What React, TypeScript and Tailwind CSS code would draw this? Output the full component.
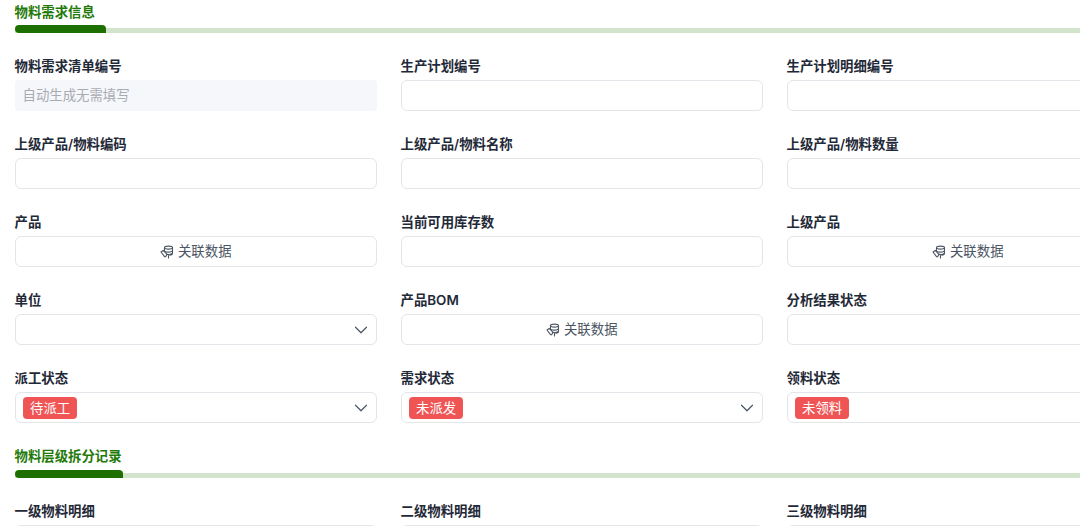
import { ChevronDown } from 'lucide-react';

const SectionTitle = ({ title, barWidth }: { title: string; barWidth: string }) => {
    return (
        <div className="w-full">
            <div className="pt-[0.5px] text-[13.4px] leading-[20px] font-semibold text-[#1f7a0a]">{title}</div>
            <div className="relative mt-[3.5px] h-[8px] w-full">
                <div className="absolute left-0 right-0 top-[3px] h-[5px] bg-[#d3e4cd]"></div>
                <div className={`absolute left-0 top-0 h-[8px] rounded-tl-[8px] rounded-tr-[8px] rounded-bl-[8px] bg-[#1d7000] ${barWidth}`}></div>
            </div>
        </div>
    );
};

const LinkIcon = () => (
    <svg width="14" height="14" viewBox="0 0 14 14" fill="none" stroke="#4b5563" strokeWidth="1.1" strokeLinecap="round" strokeLinejoin="round">
        <ellipse cx="8.5" cy="2.6" rx="4" ry="1.5" />
        <path d="M4.5 2.6v3M12.5 2.6v5.6c0 1-1 1.8-2.6 2.1M5 6.4c1.6.8 5.2.8 7.5-.5M7 9.4c1.8.3 4 .1 5.5-1.2" />
        <path d="M1 7l2.2-1.6 3.8 3.9-1.2 2.3-1.1.2z" />
        <path d="M8.5 10.6v2.4" />
    </svg>
);

const Field = ({ label, children }: { label: string; children?: React.ReactNode }) => {
    return (
        <div className="flex h-[78px] flex-col">
            <div className="h-[25px] pt-[1px] text-[13.4px] leading-[20px] font-semibold text-[#1f2937]">{label}</div>
            {children}
        </div>
    );
};

const Input = () => <div className="h-[31px] rounded-[6px] border border-[#e2e5ea] bg-white"></div>;

const Relate = () => (
    <div className="flex h-[31px] items-center justify-center gap-[4px] rounded-[6px] border border-[#e2e5ea] bg-white text-[13.4px] text-[#4b5563]">
        <LinkIcon />
        <span>关联数据</span>
    </div>
);

const Select = ({ tag }: { tag?: string }) => (
    <div className="flex h-[31px] items-center justify-between rounded-[6px] border border-[#e2e5ea] bg-white pl-[7.5px] pr-[4px]">
        {tag ? <span className="rounded-[4px] bg-[#ef5555] px-[7px] text-[13.4px] leading-[22px] text-white">{tag}</span> : <span></span>}
        <ChevronDown className="h-[22px] w-[22px] text-[#4b5563]" strokeWidth={1.3} />
    </div>
);

const App = () => {
    return (
        <div className="h-[526px] w-[1080px] overflow-hidden bg-white pl-[14.5px] pt-[1px] font-['Inter','Noto_Sans_CJK_SC',sans-serif]">
            <div className="w-[1066px]">
                <SectionTitle title="物料需求信息" barWidth="w-[91.5px]" />
            </div>
            <div className="mt-[22px] grid w-[1135px] grid-cols-[362.5px_362.5px_362.5px] gap-x-[23.5px]">
                <Field label="物料需求清单编号">
                    <div className="flex h-[31px] items-center rounded-[4px] bg-[#f5f7fa] px-[8px] text-[13.4px] text-[#a8abb2]">自动生成无需填写</div>
                </Field>
                <Field label="生产计划编号"><Input /></Field>
                <Field label="生产计划明细编号"><Input /></Field>
                <Field label="上级产品/物料编码"><Input /></Field>
                <Field label="上级产品/物料名称"><Input /></Field>
                <Field label="上级产品/物料数量"><Input /></Field>
                <Field label="产品"><Relate /></Field>
                <Field label="当前可用库存数"><Input /></Field>
                <Field label="上级产品"><Relate /></Field>
                <Field label="单位"><Select /></Field>
                <Field label="产品BOM"><Relate /></Field>
                <Field label="分析结果状态"><Input /></Field>
                <Field label="派工状态"><Select tag="待派工" /></Field>
                <Field label="需求状态"><Select tag="未派发" /></Field>
                <Field label="领料状态"><Select tag="未领料" /></Field>
            </div>
            <div className="mt-[0.5px] w-[1066px]">
                <SectionTitle title="物料层级拆分记录" barWidth="w-[108.5px]" />
            </div>
            <div className="mt-[22.5px] grid w-[1135px] grid-cols-[362.5px_362.5px_362.5px] gap-x-[23.5px]">
                <Field label="一级物料明细"><Input /></Field>
                <Field label="二级物料明细"><Input /></Field>
                <Field label="三级物料明细"><Input /></Field>
            </div>
        </div>
    );
};

export default App;
